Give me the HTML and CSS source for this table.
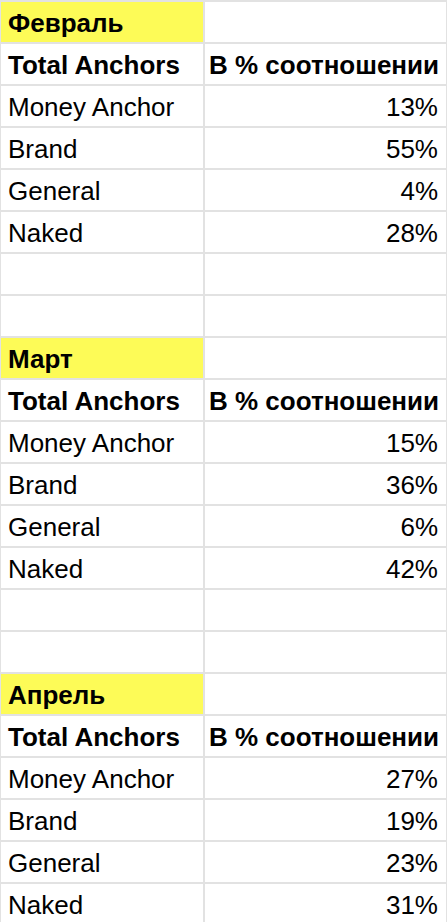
FILE: index.html
```html
<!DOCTYPE html>
<html lang="ru">
<head>
<meta charset="utf-8">
<title>Anchors</title>
<link rel="stylesheet" href="styles.css">
</head>
<body>
<div class="sheet">
  <div class="cell month">Февраль</div><div class="cell"></div>
  <div class="cell bold">Total Anchors</div><div class="cell bold num">В % соотношении</div>
  <div class="cell">Money Anchor</div><div class="cell num">13%</div>
  <div class="cell">Brand</div><div class="cell num">55%</div>
  <div class="cell">General</div><div class="cell num">4%</div>
  <div class="cell">Naked</div><div class="cell num">28%</div>
  <div class="cell"></div><div class="cell"></div>
  <div class="cell"></div><div class="cell"></div>

  <div class="cell month">Март</div><div class="cell"></div>
  <div class="cell bold">Total Anchors</div><div class="cell bold num">В % соотношении</div>
  <div class="cell">Money Anchor</div><div class="cell num">15%</div>
  <div class="cell">Brand</div><div class="cell num">36%</div>
  <div class="cell">General</div><div class="cell num">6%</div>
  <div class="cell">Naked</div><div class="cell num">42%</div>
  <div class="cell"></div><div class="cell"></div>
  <div class="cell"></div><div class="cell"></div>

  <div class="cell month">Апрель</div><div class="cell"></div>
  <div class="cell bold">Total Anchors</div><div class="cell bold num">В % соотношении</div>
  <div class="cell">Money Anchor</div><div class="cell num">27%</div>
  <div class="cell">Brand</div><div class="cell num">19%</div>
  <div class="cell">General</div><div class="cell num">23%</div>
  <div class="cell">Naked</div><div class="cell num">31%</div>
</div>
</body>
</html>
```

FILE: styles.css
```css
html, body {
  margin: 0;
  padding: 0;
  background: #ffffff;
}

body {
  font-family: "Liberation Sans", Arial, sans-serif;
  color: #000000;
  overflow: hidden;
}

.sheet {
  display: grid;
  grid-template-columns: 202px 241px;
  grid-auto-rows: 40px;
  gap: 2px;
  width: 447px;
  box-sizing: border-box;
  padding: 2px 1px 0 1px;
  background: #e2e2e2;
  margin-right: 1px;
}

.cell {
  background: #ffffff;
  font-size: 26px;
  line-height: 42px;
  padding: 0 8px 0 7px;
  white-space: nowrap;
  overflow: hidden;
}

.month {
  background: #fdfb57;
  font-weight: bold;
}

.bold {
  font-weight: bold;
}

.num {
  text-align: right;
  padding-left: 4px;
}
```
